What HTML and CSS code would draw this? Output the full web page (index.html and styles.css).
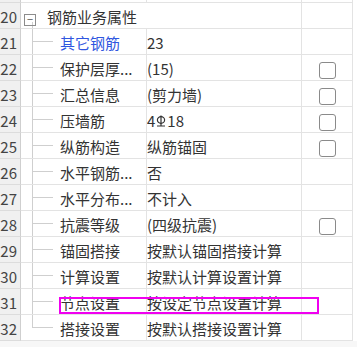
FILE: index.html
```html
<!DOCTYPE html>
<html>

<head>
    <title>钢筋业务属性</title>
    <meta charset="utf-8">
    <link rel="stylesheet" href="styles.css">
</head>

<body>

    <div class="grid">
        <table class="props">
            <colgroup>
                <col class="c-num">
                <col class="c-name">
                <col class="c-val">
                <col class="c-chk">
            </colgroup>
            <tr class="top">
                <td class="num"></td>
                <td></td>
                <td></td>
                <td></td>
            </tr>
            <tr>
                <td class="num">20</td>
                <td class="name group" colspan="2"><span class="toggle">−</span>钢筋业务属性</td>
                <td></td>
            </tr>
            <tr>
                <td class="num">21</td>
                <td class="name child"><span class="link">其它钢筋</span></td>
                <td class="val">23</td>
                <td></td>
            </tr>
            <tr>
                <td class="num">22</td>
                <td class="name child">保护层厚...</td>
                <td class="val">(15)</td>
                <td class="chk"><span class="box"></span></td>
            </tr>
            <tr>
                <td class="num">23</td>
                <td class="name child">汇总信息</td>
                <td class="val">(剪力墙)</td>
                <td class="chk"><span class="box"></span></td>
            </tr>
            <tr>
                <td class="num">24</td>
                <td class="name child">压墙筋</td>
                <td class="val">4<svg class="bar" width="10" height="14" viewBox="0 0 10 14"><ellipse cx="5" cy="6" rx="3.6" ry="3.4" fill="none" stroke="#333" stroke-width="1.2"/><path d="M5 1.5V12M1 12H9" stroke="#333" stroke-width="1.2" fill="none"/></svg>18</td>
                <td class="chk"><span class="box"></span></td>
            </tr>
            <tr>
                <td class="num">25</td>
                <td class="name child">纵筋构造</td>
                <td class="val">纵筋锚固</td>
                <td class="chk"><span class="box"></span></td>
            </tr>
            <tr>
                <td class="num">26</td>
                <td class="name child">水平钢筋...</td>
                <td class="val">否</td>
                <td></td>
            </tr>
            <tr>
                <td class="num">27</td>
                <td class="name child">水平分布...</td>
                <td class="val">不计入</td>
                <td></td>
            </tr>
            <tr>
                <td class="num">28</td>
                <td class="name child">抗震等级</td>
                <td class="val">(四级抗震)</td>
                <td class="chk"><span class="box"></span></td>
            </tr>
            <tr>
                <td class="num">29</td>
                <td class="name child">锚固搭接</td>
                <td class="val">按默认锚固搭接计算</td>
                <td></td>
            </tr>
            <tr>
                <td class="num">30</td>
                <td class="name child">计算设置</td>
                <td class="val">按默认计算设置计算</td>
                <td></td>
            </tr>
            <tr>
                <td class="num">31</td>
                <td class="name child">节点设置</td>
                <td class="val">按设定节点设置计算</td>
                <td></td>
            </tr>
            <tr>
                <td class="num">32</td>
                <td class="name child last">搭接设置</td>
                <td class="val">按默认搭接设置计算</td>
                <td></td>
            </tr>
        </table>

        <div class="mark"></div>
    </div>

    <div class="foot"></div>

</body>

</html>
```

FILE: styles.css
```css
body {
    margin: 0;
    background: #fff;
    font-family: "Noto Sans CJK SC", "Noto Sans", sans-serif;
    font-size: 15px;
    color: #333;
}

.grid {
    position: relative;
    width: 357px;
}

.props {
    border-collapse: separate;
    border-spacing: 0;
    table-layout: fixed;
    width: 353px;
}

.c-num {
    width: 21px;
}

.c-name {
    width: 126px;
}

.c-val {
    width: 155px;
}

.c-chk {
    width: 51px;
}

.props td {
    height: 23px;
    padding: 2px 0 0 0;
    border-bottom: 1px solid #e3e3e3;
    border-right: 1px solid #e3e3e3;
    white-space: nowrap;
    overflow: hidden;
    line-height: 23px;
    vertical-align: middle;
}

.props tr.top td {
    height: 2px;
    padding: 0;
    line-height: 2px;
}

.props td.num {
    background: #f0f0f0;
    border-right: 1px solid #cfcfcf;
    border-bottom-color: #dcdcdc;
    text-align: right;
    padding-right: 3px;
    color: #444;
}

.name.group {
    padding-left: 3px;
    background: linear-gradient(#cfcfcf, #cfcfcf) no-repeat 11px 100% / 1px 6px;
}

.toggle {
    display: inline-block;
    box-sizing: border-box;
    width: 12px;
    height: 12px;
    border: 1px solid #8c8c8c;
    line-height: 9px;
    font-size: 11px;
    text-align: center;
    color: #555;
    vertical-align: -1px;
    margin-right: 11px;
}

.name.child {
    padding-left: 39px;
    background:
        linear-gradient(#cfcfcf, #cfcfcf) no-repeat 11px 0 / 1px 100%,
        linear-gradient(#cfcfcf, #cfcfcf) no-repeat 11px 50% / 21px 1px;
}

.name.child.last {
    background:
        linear-gradient(#cfcfcf, #cfcfcf) no-repeat 11px 0 / 1px 50%,
        linear-gradient(#cfcfcf, #cfcfcf) no-repeat 11px 50% / 21px 1px;
}

.link {
    color: #2f56e0;
}

.val {
    padding-left: 5px;
}

.bar {
    vertical-align: -1px;
    margin: 0 1px;
}

.chk {
    text-align: center;
}

.box {
    display: inline-block;
    box-sizing: border-box;
    width: 17px;
    height: 17px;
    border: 1.5px solid #8a8a8a;
    border-radius: 3px;
    vertical-align: middle;
}

.mark {
    position: absolute;
    left: 59px;
    top: 297px;
    width: 260px;
    height: 17px;
    box-sizing: border-box;
    border: 2px solid #f000f0;
}

.foot {
    height: 6px;
    background: #f7f7f7;
}
```
